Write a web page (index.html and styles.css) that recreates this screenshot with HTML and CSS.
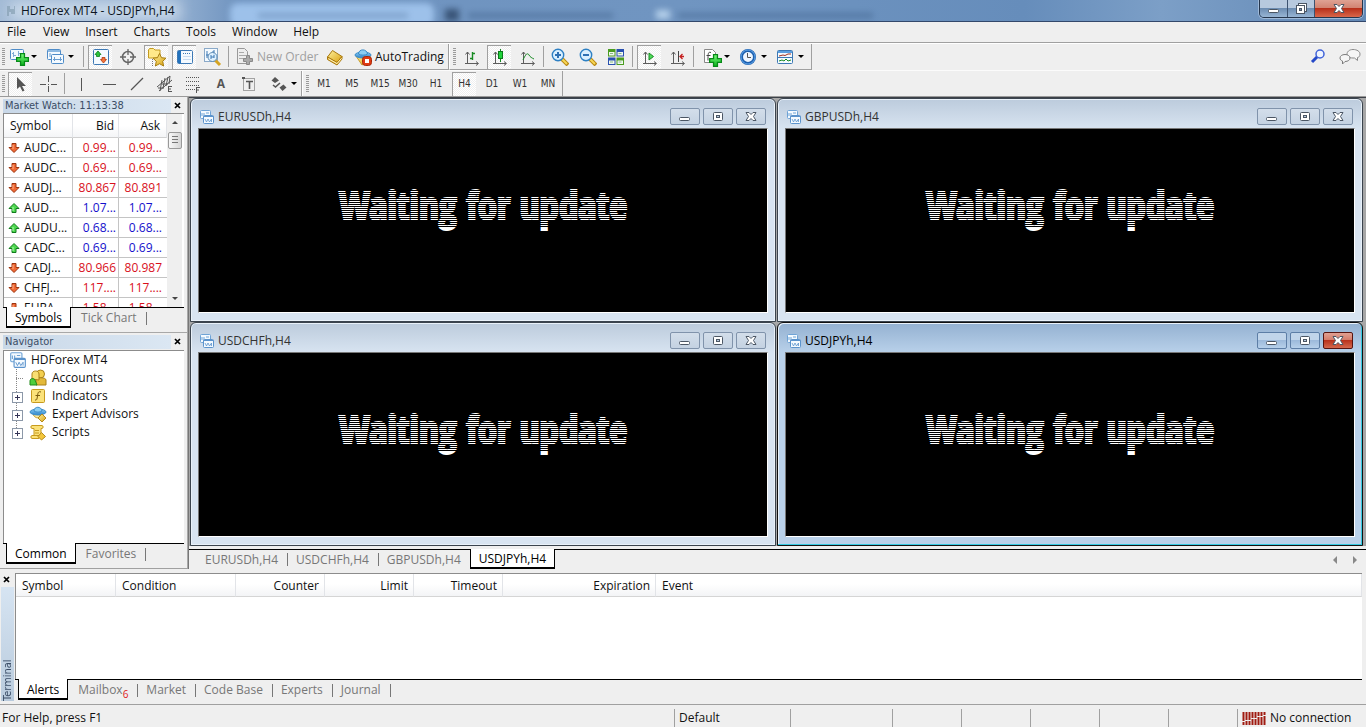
FILE: index.html
```html
<!DOCTYPE html>
<html lang="en">
<head>
<meta charset="utf-8">
<title>HDForex MT4 - USDJPYh,H4</title>
<link rel="stylesheet" href="styles.css">
</head>
<body>
<svg class="defs" aria-hidden="true">
  <defs>
    <linearGradient id="g-green" x1="0" y1="0" x2="0" y2="1"><stop offset="0" stop-color="#7dff7d"/><stop offset="1" stop-color="#0ab01c"/></linearGradient>
    <linearGradient id="g-gold" x1="0" y1="0" x2="1" y2="1"><stop offset="0" stop-color="#fff3a0"/><stop offset="1" stop-color="#d9a010"/></linearGradient>
    <linearGradient id="g-blue" x1="0" y1="0" x2="0" y2="1"><stop offset="0" stop-color="#8fd0f8"/><stop offset="1" stop-color="#2b82c9"/></linearGradient>
    <symbol id="i-chart" viewBox="0 0 16 16"><rect x="1.500" y="1.500" width="10" height="8" rx="1" fill="#f4faff" stroke="#6ea3d6"/><path d="M3 7V4M5 7V4M7 4h3" stroke="#6ea3d6" fill="none"/><rect x="4.500" y="6.500" width="10" height="8" rx="1" fill="#f4faff" stroke="#5b93cc"/><path d="M4.500 7.500h10" stroke="#5b93cc"/><path d="M6 10l1.500 3 1.500-3 1.500 3 2-3v3" stroke="#5b93cc" stroke-width=".8" fill="none"/></symbol>
    <symbol id="i-down" viewBox="0 0 12 12"><path d="M4 1.500h4v4h3L6 10.500 1 5.500h3z" fill="#f26a35" stroke="#9c3510"/><path d="M5 3v4" stroke="#ffb08a"/></symbol>
    <symbol id="i-up" viewBox="0 0 12 12"><path d="M4 10.500h4v-4h3L6 1.500 1 6.500h3z" fill="#4fd94f" stroke="#127a1e"/><path d="M5 9V5" stroke="#b4ffb4"/></symbol>
    <symbol id="i-plus" viewBox="0 0 10 10"><path d="M3.500.5h3v3h3v3h-3v3h-3v-3h-3v-3h3z" fill="url(#g-green)" stroke="#078a18"/></symbol>
    <symbol id="i-min" viewBox="0 0 16 12"><rect x="2.500" y="6.500" width="10" height="3" rx="1" fill="#fff" stroke="#4b5664"/></symbol>
    <symbol id="i-max" viewBox="0 0 16 12"><rect x="3.500" y="1.500" width="9" height="8" rx="1" fill="#fff" stroke="#4b5664"/><rect x="6.500" y="4.500" width="3" height="2" fill="#b9cbe0" stroke="#4b5664"/></symbol>
    <symbol id="i-x" viewBox="0 0 16 12"><path d="M3 1.500h3l2 2 2-2h3L10.500 5.500l2.500 4h-3l-2-2-2 2H3l2.500-4z" fill="#fff" stroke="#4b5664"/></symbol>
    <symbol id="i-axes" viewBox="0 0 16 16"><path d="M4.500 2v12M2 13.500h13M2.500 4.500l2-2.500 2 2.500M13 11.500l2.500 2-2.500 2" fill="none" stroke="#5d5d5d"/></symbol>
    <symbol id="i-cap" viewBox="0 0 18 18"><path d="M2 8l6 9 8-5V8z" fill="url(#g-gold)" stroke="#c79a2a"/><ellipse cx="9" cy="7" rx="8" ry="3" fill="url(#g-blue)" stroke="#3b8cc8"/><path d="M4.500 6c0-5.500 8.500-5.500 9 0-2 1.500-7 1.500-9 0z" fill="#8bcdf2" stroke="#3b8cc8"/></symbol>
    <symbol id="i-expert" viewBox="0 0 18 18"><path d="M4 9c1 3 4 5 7 3V8z" fill="#fbe9a0" stroke="#c79a2a"/><ellipse cx="9" cy="7" rx="8" ry="3" fill="url(#g-blue)" stroke="#3b8cc8"/><path d="M5 6c0-5 7.500-5 8 0-2 1.500-6 1.500-8 0z" fill="#8bcdf2" stroke="#3b8cc8"/><path d="M13 9l4 4-4 4-4-4z" fill="url(#g-gold)" stroke="#b58a1c"/></symbol>
  </defs>
</svg>

<header class="titlebar">
  <div class="glass" aria-hidden="true"><i class="glow"></i><i class="pane"></i><i class="smear one"></i><i class="dot"></i><i class="smear two"></i><i class="light"></i><i class="smear three"></i></div>
  <svg class="app-icon" width="12" height="14" viewBox="0 0 12 14"><path d="M2 2h3v3h4V2h1v8H6V8H4v4H2z" fill="#7f9aac" opacity=".6"/></svg>
  <h1>HDForex MT4 - USDJPYh,H4</h1>
  <div class="caption">
    <button class="cap-min" aria-label="Minimize"><svg width="16" height="12"><use href="#i-min"/></svg></button>
    <button class="cap-res" aria-label="Restore"><svg width="16" height="14" viewBox="0 0 16 14"><rect x="5.500" y="1.500" width="8" height="8" fill="#fff" stroke="#4b5664"/><rect x="3.500" y="3.500" width="8" height="8" fill="#fff" stroke="#4b5664"/><rect x="6.500" y="6.500" width="2" height="2" fill="#7b91ad" stroke="#4b5664"/></svg></button>
    <button class="cap-close" aria-label="Close"><svg width="16" height="12"><use href="#i-x"/></svg></button>
  </div>
</header>

<nav class="menubar">
  <button>File</button><button>View</button><button>Insert</button><button>Charts</button><button>Tools</button><button>Window</button><button>Help</button>
</nav>

<div class="toolrow">
  <div class="toolbar">
    <span class="grip"></span>
    <div class="splits">
      <button class="split" aria-label="New chart"><svg width="20" height="20" viewBox="0 0 20 20"><rect x="1.500" y="2.500" width="13" height="10" rx="1" fill="#f4faff" stroke="#4f8cc8"/><path d="M4.500 5v5M3 6.500h1M5 8.500h2M9.500 4v5M10 6.500h2" stroke="#7fabd6"/><use href="#i-plus" x="7" y="6" width="13" height="13"/></svg><span class="arrow"></span></button>
      <button class="split" aria-label="Profiles"><svg width="20" height="20" viewBox="0 0 20 20"><rect x="1.500" y="2.500" width="13" height="10" rx="1" fill="#f4faff" stroke="#4f8cc8"/><path d="M2 4h12" stroke="#8db9e2" stroke-width="2"/><rect x="5.500" y="7.500" width="12" height="9" rx="1" fill="#f4faff" stroke="#4f8cc8"/><path d="M8.500 10v4M14.500 10v4M7 12.500h9M4 6v4" stroke="#6a9dd0"/></svg><span class="arrow"></span></button>
    </div>
    <span class="sep"></span>
    <div class="group">
      <button class="tool pressed" aria-label="Market Watch"><svg width="18" height="18" viewBox="0 0 18 18"><rect x="1.500" y="1.500" width="15" height="15" rx="1" fill="#f4faff" stroke="#3c78b4"/><path d="M6 3l3 3.500H7.500v2h-3v-2H3z" fill="#2cc43c" stroke="#0b7f1b" stroke-width=".8"/><path d="M11.500 15l3-3.500H13v-2h-3v2H8.500z" fill="#f2743d" stroke="#b1380d" stroke-width=".8"/></svg></button>
      <button class="tool" aria-label="Data Window"><svg width="18" height="18" viewBox="0 0 18 18"><circle cx="9" cy="9" r="5.500" fill="none" stroke="#666" stroke-width="1.500"/><path d="M9 1v6M9 11v6M1 9h6M11 9h6" stroke="#666" stroke-width="1.300"/></svg></button>
      <button class="tool pressed" aria-label="Favorites"><svg width="20" height="20" viewBox="0 0 20 20"><path d="M1.500 11V3l1-1.500h4L8 3h5v8z" fill="#ffe98a" stroke="#c39a20"/><path d="M5.500 12v7" stroke="#777" stroke-dasharray="1 1"/><path d="M12.500 6.500l2 4.200 4.500.5-3.300 3.100.9 4.700-4.100-2.300-4.100 2.300.9-4.700L6 11.200l4.500-.5z" fill="url(#g-gold)" stroke="#a87d0c"/></svg></button>
      <button class="tool pressed" aria-label="Navigator"><svg width="18" height="18" viewBox="0 0 18 18"><rect x="1.500" y="2.500" width="15" height="13" rx="1" fill="#f4faff" stroke="#3c78b4"/><path d="M3.500 3v12" stroke="#2272bd" stroke-width="3"/><path d="M7 5.500h8" stroke="#3c78b4" stroke-dasharray="1 1"/><path d="M7 8.500h8M7 11.500h8" stroke="#c8dcf0"/></svg></button>
      <button class="tool" aria-label="Strategy Tester"><svg width="20" height="20" viewBox="0 0 20 20"><rect x="2.500" y="1.500" width="13" height="13" fill="#f4faff" stroke="#8aa9c8"/><path d="M5 4v7M4 8h3M12 3v6M10 5h2" stroke="#3c78b4"/><path d="M13 13l5 5" stroke="#d5a422" stroke-width="3"/><circle cx="10.500" cy="10" r="4.500" fill="#d9efff" fill-opacity=".8" stroke="#5d8bb5"/><path d="M9 8v4M9 10h3M12 8v3" stroke="#3c78b4"/></svg></button>
    </div>
    <span class="sep"></span>
    <div class="group">
      <button class="labelled new-order" disabled><svg width="20" height="20" viewBox="0 0 20 20"><path d="M2.500 1.500h7l3 3v12h-10z" fill="#eee" stroke="#999"/><path d="M4 5.500h5M4 8.500h7M4 11.500h5" stroke="#aaa"/><path d="M11.500 8.500h3v3h3v3h-3v3h-3v-3h-3v-3h3z" fill="#aaa" stroke="#8a8a8a"/></svg>New Order</button>
      <button class="tool" aria-label="MetaEditor"><svg width="18" height="18" viewBox="0 0 18 18"><path d="M1.500 9l5-6.500 9.500 6-5 6z" fill="url(#g-gold)" stroke="#a9780d"/><path d="M1.500 9v2.500L11 17l5-6V8.500l-5 6z" fill="#e9b93a" stroke="#a9780d"/><path d="M2.500 10.700L11 15.600l4.500-5.300" fill="none" stroke="#fff3c0"/></svg></button>
      <button class="labelled"><svg width="20" height="20" viewBox="0 0 20 20"><use href="#i-cap" x="1" y="1" width="18" height="18"/><rect x="9.500" y="9.500" width="9" height="9" rx="3" fill="#e03a12" stroke="#a92808"/><rect x="12" y="12" width="4" height="4" fill="#fff"/></svg>AutoTrading</button>
    </div>
  </div>
  <div class="toolbar">
    <span class="grip"></span>
    <div class="group lead">
      <button class="tool" aria-label="Bar chart"><svg width="18" height="18" viewBox="0 0 18 18"><use href="#i-axes" x="1" y="2" width="16" height="16"/><path d="M10.500 4v8M8 10.500h2.500M10.500 5.500H13" stroke="#178a22" stroke-width="1.400"/></svg></button>
      <button class="tool pressed" aria-label="Candlesticks"><svg width="18" height="18" viewBox="0 0 18 18"><use href="#i-axes" x="1" y="2" width="16" height="16"/><path d="M10.500 1v13" stroke="#178a22"/><rect x="8.500" y="3.500" width="4" height="7" fill="#1fd43a" stroke="#0c7a1b"/></svg></button>
      <button class="tool" aria-label="Line chart"><svg width="18" height="18" viewBox="0 0 18 18"><use href="#i-axes" x="1" y="2" width="16" height="16"/><path d="M5 12c3-7 5-7 6-5s3 3 5 4" fill="none" stroke="#178a22"/></svg></button>
    </div>
    <span class="sep"></span>
    <div class="group">
      <button class="tool" aria-label="Zoom in"><svg width="18" height="18" viewBox="0 0 18 18"><path d="M11 11l6 6" stroke="#b98812" stroke-width="4"/><path d="M11 11l5 5" stroke="#f7d656" stroke-width="2"/><circle cx="7" cy="7" r="5.700" fill="#d8efff" stroke="#2d80c4" stroke-width="1.400"/><path d="M4 7h6M7 4v6" stroke="#2d70b4" stroke-width="2"/></svg></button>
      <button class="tool" aria-label="Zoom out"><svg width="18" height="18" viewBox="0 0 18 18"><path d="M11 11l6 6" stroke="#b98812" stroke-width="4"/><path d="M11 11l5 5" stroke="#f7d656" stroke-width="2"/><circle cx="7" cy="7" r="5.700" fill="#d8efff" stroke="#2d80c4" stroke-width="1.400"/><path d="M4 7h6" stroke="#2d70b4" stroke-width="2"/></svg></button>
      <button class="tool" aria-label="Tile windows"><svg width="18" height="18" viewBox="0 0 18 18"><path d="M1 1h7.500v7.500H1zM9.500 9.500H17V17H9.500z" fill="#4a9c20"/><path d="M9.500 1H17v7.500H9.500zM1 9.500h7.500V17H1z" fill="#2850b0"/><path d="M2 4h5.500v3.500H2zM10.500 4H16v3.500h-5.500zM2 12.500h5.500V16H2zM10.500 12.500H16V16h-5.500z" fill="#f0f8f0"/><path d="M3 5.500h3M11.500 5.500h3M3 14h3M11.500 14h3" stroke="#8ab88a"/></svg></button>
    </div>
    <span class="sep"></span>
    <div class="group">
      <button class="tool pressed" aria-label="Auto scroll"><svg width="18" height="18" viewBox="0 0 18 18"><use href="#i-axes" x="1" y="2" width="16" height="16"/><path d="M9 5l4.500 3.500L9 12z" fill="#4fdc5a" stroke="#178a22"/></svg></button>
      <button class="tool" aria-label="Chart shift"><svg width="18" height="18" viewBox="0 0 18 18"><use href="#i-axes" x="1" y="2" width="16" height="16"/><path d="M10.500 3v11" stroke="#444"/><path d="M12 8.500h4M14.500 6L12 8.500l2.500 2.500" fill="none" stroke="#c52020" stroke-width="1.300"/></svg></button>
    </div>
    <span class="sep"></span>
    <div class="splits">
      <button class="split" aria-label="Indicators"><svg width="20" height="20" viewBox="0 0 20 20"><path d="M2.500 2.500h8l3 3v10h-11z" fill="#fff" stroke="#888"/><path d="M9 5.500c-3-1-3 1-3 8M4.500 8.500h4" fill="none" stroke="#444"/><use href="#i-plus" x="7" y="7" width="13" height="13"/></svg><span class="arrow"></span></button>
      <button class="split" aria-label="Periods"><svg width="20" height="20" viewBox="0 0 20 20"><circle cx="9" cy="10" r="6.500" fill="#eef6ff" stroke="#1c5fae" stroke-width="3"/><circle cx="9" cy="10" r="7" fill="none" stroke="#5fa5ea"/><path d="M8.500 6v4.500H12" fill="none" stroke="#555"/></svg><span class="arrow"></span></button>
      <button class="split" aria-label="Templates"><svg width="20" height="20" viewBox="0 0 20 20"><rect x="1.500" y="3.500" width="15" height="13" rx="1" fill="#f4faff" stroke="#3c78b4"/><path d="M2 5h14" stroke="#5a9fe0" stroke-width="2"/><path d="M2 10.500h14" stroke="#3c78b4"/><path d="M3 9l4-1 2 .5 3-1.500h3" fill="none" stroke="#a03020"/><path d="M3 14l3-1 2 1 2-2 2 2 3-1" fill="none" stroke="#178a22"/></svg><span class="arrow"></span></button>
    </div>
  </div>
  <div class="right-tools">
    <button class="tool" aria-label="Search"><svg width="18" height="18" viewBox="0 0 18 18"><circle cx="11" cy="6" r="4" fill="#eef4ff" stroke="#3f62d8" stroke-width="1.500"/><path d="M8 9l-5 5" stroke="#2448c8" stroke-width="3"/></svg></button>
    <button class="tool" aria-label="Chat"><svg width="22" height="18" viewBox="0 0 22 18"><path d="M14 1.500c4 0 7 2 7 4.500s-1 3-2.500 3.500v3L15.500 10H14c-4 0-6-2-6-4s2-4.500 6-4.500z" fill="#f6f6f6" stroke="#8b8b8b"/><path d="M6 6.500c3 0 5 1.500 5 3.500s-2 3.500-5 3.500l-2.500 2.500v-3C2 12.500 1 11.500 1 10c0-2 2-3.500 5-3.500z" fill="#f6f6f6" stroke="#7b7b7b"/></svg></button>
  </div>
</div>

<div class="toolrow second">
  <div class="toolbar">
    <span class="grip"></span>
    <div class="group cursors">
      <button class="tool pressed" aria-label="Cursor"><svg width="18" height="18" viewBox="0 0 18 18"><path d="M5 2v12l3-2.500 2.500 5 2-1-2.500-4.500h4z" fill="#555"/></svg></button>
      <button class="tool" aria-label="Crosshair"><svg width="18" height="18" viewBox="0 0 18 18"><path d="M9.500 1v6M9.500 11v6M1 9.500h6M12 9.500h6M9 9.500h1" stroke="#555"/></svg></button>
    </div>
    <span class="sep"></span>
    <div class="group">
      <button class="tool" aria-label="Vertical line"><svg width="18" height="18" viewBox="0 0 18 18"><path d="M9.500 3v13" stroke="#555"/></svg></button>
      <button class="tool" aria-label="Horizontal line"><svg width="18" height="18" viewBox="0 0 18 18"><path d="M3 9.500h13" stroke="#555"/></svg></button>
      <button class="tool" aria-label="Trendline"><svg width="18" height="18" viewBox="0 0 18 18"><path d="M3 15L15 3" stroke="#555" stroke-width="1.200"/></svg></button>
      <button class="tool" aria-label="Equidistant channel"><svg width="18" height="18" viewBox="0 0 18 18"><path d="M1 12L14 1M3 16L16 5M4 16L6 5M7 13L9 3M10 11l2-9M13 9l1-8M2 13h6M6 9h6" stroke="#555" fill="none"/><path d="M12.500 11v6M12 11.500h4M12 14h3M12 16.500h4" stroke="#555"/></svg></button>
      <button class="tool" aria-label="Fibonacci retracement"><svg width="18" height="18" viewBox="0 0 18 18"><path d="M2 2.500h14M2 6.500h14M2 10.500h14M2 14.500h9" stroke="#555" stroke-dasharray="1 1"/><path d="M12.500 12v6M12 12.500h4M12 15h3" stroke="#555"/></svg></button>
      <button class="tool glyph" aria-label="Text">A</button>
      <button class="tool" aria-label="Text label"><svg width="18" height="18" viewBox="0 0 18 18"><rect x="3.500" y="3.500" width="11" height="12" fill="none" stroke="#555" stroke-dasharray="1 1"/><path d="M2 2h3v2H2z" fill="#555"/><path d="M6 6.500h7M9.500 6v8" stroke="#555" stroke-width="1.600"/></svg></button>
    </div>
    <div class="splits shapes">
      <button class="split" aria-label="Arrows"><svg width="20" height="20" viewBox="0 0 20 20"><path d="M6 3l4 3.500L6 9 2.500 6.500z M14.500 10.500l3 3-4 3.500-3-3.500z" fill="#555"/><path d="M4 11l2.500 2 4.500-4" fill="none" stroke="#555" stroke-width="1.600"/></svg><span class="arrow"></span></button>
    </div>
  </div>
  <div class="toolbar">
    <span class="grip"></span>
    <div class="group frames">
      <button class="tool">M1</button><button class="tool">M5</button><button class="tool">M15</button><button class="tool">M30</button><button class="tool">H1</button><button class="tool pressed">H4</button><button class="tool">D1</button><button class="tool">W1</button><button class="tool">MN</button>
    </div>
  </div>
</div>

<main class="workspace">
  <aside class="side">
    <section class="panel watch">
      <header class="panel-head"><h2>Market Watch: 11:13:38</h2><button class="x" aria-label="Close Market Watch"><svg width="7" height="7" viewBox="0 0 7 7"><path d="M1 1l5 5M6 1L1 6" stroke="#000" stroke-width="1.700"/></svg></button></header>
      <div class="quotes">
        <table>
          <thead><tr><th>Symbol</th><th>Bid</th><th>Ask</th></tr></thead>
          <tbody>
            <tr class="down"><td><svg width="12" height="12"><use href="#i-down"/></svg>AUDC...</td><td>0.99...</td><td>0.99...</td></tr>
            <tr class="down"><td><svg width="12" height="12"><use href="#i-down"/></svg>AUDC...</td><td>0.69...</td><td>0.69...</td></tr>
            <tr class="down"><td><svg width="12" height="12"><use href="#i-down"/></svg>AUDJ...</td><td>80.867</td><td>80.891</td></tr>
            <tr class="up"><td><svg width="12" height="12"><use href="#i-up"/></svg>AUD...</td><td>1.07...</td><td>1.07...</td></tr>
            <tr class="up"><td><svg width="12" height="12"><use href="#i-up"/></svg>AUDU...</td><td>0.68...</td><td>0.68...</td></tr>
            <tr class="up"><td><svg width="12" height="12"><use href="#i-up"/></svg>CADC...</td><td>0.69...</td><td>0.69...</td></tr>
            <tr class="down"><td><svg width="12" height="12"><use href="#i-down"/></svg>CADJ...</td><td>80.966</td><td>80.987</td></tr>
            <tr class="down"><td><svg width="12" height="12"><use href="#i-down"/></svg>CHFJ...</td><td>117....</td><td>117....</td></tr>
            <tr class="down"><td><svg width="12" height="12"><use href="#i-down"/></svg>EURA...</td><td>1.58...</td><td>1.58...</td></tr>
          </tbody>
        </table>
        <div class="scrollbar"><button class="sb-up" aria-label="Scroll up"></button><span class="thumb"></span><button class="sb-down" aria-label="Scroll down"></button></div>
      </div>
      <div class="tabs"><button class="active">Symbols</button><button>Tick Chart</button></div>
    </section>
    <section class="panel navigator">
      <header class="panel-head"><h2>Navigator</h2><button class="x" aria-label="Close Navigator"><svg width="7" height="7" viewBox="0 0 7 7"><path d="M1 1l5 5M6 1L1 6" stroke="#000" stroke-width="1.700"/></svg></button></header>
      <div class="tree">
        <div class="root"><svg width="18" height="18"><use href="#i-chart"/></svg>HDForex MT4</div>
        <ul>
          <li><span class="branch"></span><svg width="18" height="18" viewBox="0 0 18 18"><circle cx="11.500" cy="5" r="4" fill="#f3cf4f" stroke="#a9811a"/><path d="M7 16v-5c0-3 10-3 10 0v5z" fill="#e3b93a" stroke="#a9811a"/><path d="M3 10V5c0-4 7-4 7 0v6z" fill="#f8de72" stroke="#a9811a"/><path d="M1 16v-4c0-3 4-3 5-1l2 5z" fill="#4fce3e" stroke="#238a1a"/></svg>Accounts</li>
          <li><span class="branch plus"></span><svg width="18" height="18" viewBox="0 0 18 18"><rect x="2.500" y="2.500" width="13" height="13" rx="1" fill="#fbe27a" stroke="#c79a1e"/><path d="M12 5c-3-1-3 1-3.500 4S8 13.500 6 13M6.500 8.500h4.500" fill="none" stroke="#7c5c0c"/></svg>Indicators</li>
          <li><span class="branch plus"></span><svg width="18" height="18"><use href="#i-expert"/></svg>Expert Advisors</li>
          <li><span class="branch plus last"></span><svg width="18" height="18" viewBox="0 0 18 18"><path d="M3 2.500h10c1.500 0 1.500 3 0 3h-1v8H5v-8H3c-1.500 0-1.500-3 0-3z" fill="#fbe27a" stroke="#c79a1e"/><path d="M6 7.500h4M6 10h4" stroke="#c79a1e"/><path d="M3 12.500h7v3H3c-1.500 0-1.500-3 0-3z" fill="#fbe27a" stroke="#c79a1e"/><path d="M12.500 9.500l4 4-4 3.500-3.500-3.500z" fill="#f3c63c" stroke="#b58a1c"/></svg>Scripts</li>
        </ul>
      </div>
      <div class="tabs"><button class="active">Common</button><button>Favorites</button></div>
    </section>
  </aside>

  <section class="mdi">
    <div class="windows">
      <article class="window"><header><svg width="16" height="16"><use href="#i-chart"/></svg><h3>EURUSDh,H4</h3><button aria-label="Minimize"><svg width="16" height="12"><use href="#i-min"/></svg></button><button aria-label="Maximize"><svg width="16" height="12"><use href="#i-max"/></svg></button><button aria-label="Close"><svg width="16" height="12"><use href="#i-x"/></svg></button></header><div class="chart"><p>Waiting for update</p></div></article>
      <article class="window"><header><svg width="16" height="16"><use href="#i-chart"/></svg><h3>GBPUSDh,H4</h3><button aria-label="Minimize"><svg width="16" height="12"><use href="#i-min"/></svg></button><button aria-label="Maximize"><svg width="16" height="12"><use href="#i-max"/></svg></button><button aria-label="Close"><svg width="16" height="12"><use href="#i-x"/></svg></button></header><div class="chart"><p>Waiting for update</p></div></article>
      <article class="window"><header><svg width="16" height="16"><use href="#i-chart"/></svg><h3>USDCHFh,H4</h3><button aria-label="Minimize"><svg width="16" height="12"><use href="#i-min"/></svg></button><button aria-label="Maximize"><svg width="16" height="12"><use href="#i-max"/></svg></button><button aria-label="Close"><svg width="16" height="12"><use href="#i-x"/></svg></button></header><div class="chart"><p>Waiting for update</p></div></article>
      <article class="window focused"><header><svg width="16" height="16"><use href="#i-chart"/></svg><h3>USDJPYh,H4</h3><button aria-label="Minimize"><svg width="16" height="12"><use href="#i-min"/></svg></button><button aria-label="Maximize"><svg width="16" height="12"><use href="#i-max"/></svg></button><button class="close" aria-label="Close"><svg width="16" height="12"><use href="#i-x"/></svg></button></header><div class="chart"><p>Waiting for update</p></div></article>
    </div>
    <div class="tabs chart-tabs"><button>EURUSDh,H4</button><button>USDCHFh,H4</button><button class="before">GBPUSDh,H4</button><button class="active">USDJPYh,H4</button><span class="pager"><button aria-label="Previous"></button><button class="next" aria-label="Next"></button></span></div>
  </section>
</main>

<section class="terminal">
  <div class="rail"><button class="x" aria-label="Close Terminal"><svg width="7" height="7" viewBox="0 0 7 7"><path d="M1 1l5 5M6 1L1 6" stroke="#000" stroke-width="1.700"/></svg></button><h2>Terminal</h2></div>
  <div class="terminal-body">
    <div class="alerts">
      <table>
        <thead><tr><th class="c-symbol">Symbol</th><th class="c-condition">Condition</th><th class="c-num right">Counter</th><th class="c-num right">Limit</th><th class="c-num right">Timeout</th><th class="c-exp right">Expiration</th><th>Event</th></tr></thead>
      </table>
    </div>
    <div class="tabs"><button class="active">Alerts</button><button class="mail">Mailbox<sub>6</sub></button><button>Market</button><button>Code Base</button><button>Experts</button><button>Journal</button></div>
  </div>
</section>

<footer class="status">
  <span class="help">For Help, press F1</span><span class="s-profile">Default</span><span class="s-date"></span><span class="s-cell"></span><span class="s-cell"></span><span class="s-cell"></span><span class="s-cell"></span><span class="s-cell"></span>
  <span class="s-conn"><svg width="24" height="13" viewBox="0 0 24 13"><path d="M1.500 0v9M4.500 0v8M7.500 0v8M10.500 0v6M13.500 0v6M16.500 0v4M19.500 0v4M22.500 0v3M1.500 10v3M4.500 9v4M7.500 9v4M10.500 7v6M13.500 7v6M16.500 5v8M19.500 5v8M22.500 4v9" stroke="#a01c12" stroke-width="2"/></svg>No connection</span>
</footer>
</body>
</html>
```
FILE: styles.css
```css
* { box-sizing: border-box; }
html, body { height: 100%; }
body {
  margin: 0;
  display: flex;
  flex-direction: column;
  background: #efefef;
  color: #111;
  font: 12px/16px "Segoe UI", "Open Sans", "Noto Sans", sans-serif;
  overflow: hidden;
}
button { font: inherit; color: inherit; background: none; border: 0; padding: 0; margin: 0; }
h1, h2, h3, p, ul { margin: 0; padding: 0; font-size: inherit; font-weight: normal; list-style: none; }
svg { display: block; flex: none; }
.defs { position: absolute; width: 0; height: 0; }

/* Title bar */
.titlebar {
  position: relative;
  flex: none;
  display: flex;
  align-items: center;
  height: 22px;
  padding-left: 5px;
  border-bottom: 1px solid #33486b;
  background: linear-gradient(90deg, #a3bbd6 0, #91aed0 180px, #6f93bf 240px, #7095c1 50%, #668dbb 75%, #7c9fc7 85%, #6288b5 100%);
}
.glass { position: absolute; inset: 0; overflow: hidden; }
.glass i { position: absolute; }
.glow { left: 10px; top: 2px; width: 170px; height: 18px; background: #cbdaea; filter: blur(7px); }
.pane { left: 230px; top: 3px; width: 204px; height: 24px; background: #9dc1ea; border-radius: 8px; filter: blur(3px); }
.smear { height: 5px; top: 13px; background: #43658f; filter: blur(3px); opacity: .6; }
.one { left: 258px; width: 150px; opacity: .35; }
.two { left: 468px; width: 145px; }
.three { left: 678px; width: 195px; }
.dot { left: 445px; top: 9px; width: 14px; height: 12px; background: #2c4566; filter: blur(3px); opacity: .8; }
.light { left: 656px; top: 10px; width: 14px; height: 9px; background: #b4cfea; filter: blur(3px); }
.app-icon, .titlebar h1, .caption { position: relative; }
.titlebar h1 { margin-left: 4px; flex: 1; color: #0c1522; }
.caption {
  align-self: flex-start;
  display: flex;
  height: 18px;
  margin-right: 3px;
  border: 1px solid #25364d;
  border-top: 0;
  border-radius: 0 0 5px 5px;
  overflow: hidden;
  box-shadow: 0 0 0 1px #9fb9d8;
}
.caption button { display: flex; align-items: center; justify-content: center; background: linear-gradient(#b7c9de 45%, #6d8db2 50%, #98b5d4); border-right: 1px solid #3c5270; }
.caption .cap-min { width: 28px; }
.caption .cap-res { width: 27px; }
.caption .cap-close { width: 47px; border-right: 0; background: linear-gradient(#dfa293, #d28472 45%, #b8301a 50%, #d9674a); }

/* Menu */
.menubar { flex: none; display: flex; height: 21px; border-bottom: 1px solid #a0a0a0; padding-left: 1px; }
.menubar button { padding: 0 8px; }
.menubar button:first-child { padding: 0 9px 0 6px; }

/* Toolbars */
.toolrow { flex: none; display: flex; height: 27px; border-top: 1px solid #fff; }
.toolbar { display: flex; align-items: center; height: 26px; border-right: 1px solid #a0a0a0; border-bottom: 1px solid #a0a0a0; padding: 0 2px; }
.second { height: 26px; border-top-color: #fbfbfb; }
.second .toolbar { height: 25px; border-bottom: 0; }
.toolbar + .toolbar { padding: 0 2px 0 3px; border-left: 1px solid #fff; }
.grip { width: 3px; height: 18px; background: repeating-linear-gradient(#9a9a9a 0 1px, #efefef 1px 2px); }
.group { display: flex; gap: 4px; }
.splits { display: flex; }
.lead { margin-left: 3px; }
.cursors { margin-left: 3px; }
.frames { margin-left: 3px; font: 10px/14px "DejaVu Sans Condensed", "DejaVu Sans", sans-serif; color: #333; }
.shapes { margin-left: 4px; margin-right: -3px; }
.sep { width: 1px; height: 21px; margin: 0 4px; background: #a0a0a0; }
.tool { display: flex; align-items: center; justify-content: center; width: 24px; height: 24px; white-space: nowrap; }
.pressed { background: repeating-conic-gradient(#fff 0 25%, #efefef 0 50%) 0 0 / 2px 2px; border-top: 1px solid #a0a0a0; border-left: 1px solid #a0a0a0; }
.glyph { font: bold 12px "Open Sans", sans-serif; color: #555; }
.split { display: flex; align-items: center; width: 37px; height: 24px; padding-left: 4px; }
.arrow { border: 3px solid transparent; border-top-color: #000; border-bottom: 0; margin-left: 2px; }
.labelled { display: flex; align-items: center; gap: 2px; padding: 0 2px; height: 24px; white-space: nowrap; }
.new-order { width: 86px; color: #a0a0a0; }
.right-tools { flex: 1; display: flex; justify-content: flex-end; align-items: center; gap: 8px; padding-right: 4px; }

/* Workspace */
.workspace { flex: 1; min-height: 0; display: grid; grid-template-columns: 188px minmax(0, 1fr); border-top: 1px solid #9a9a9a; }
.side { display: flex; flex-direction: column; min-height: 0; border-bottom: 1px solid #a0a0a0; }
.panel { display: flex; flex-direction: column; padding: 1px 3px 4px 3px; border-right: 1px solid #a8a8a8; }
.watch { height: 236px; border-bottom: 1px solid #a8a8a8; }
.navigator { flex: 1; min-height: 0; }
.panel-head { flex: none; display: flex; align-items: center; justify-content: space-between; height: 15px; color: #3b4d66; font: 11px/14px "Tahoma", "DejaVu Sans Condensed", "DejaVu Sans", sans-serif; }
.panel-head h2 { flex: 1; height: 14px; padding-left: 2px; background: linear-gradient(90deg, #c9d8e8, #dbe7f3); }
.x { display: flex; align-items: center; justify-content: center; width: 13px; height: 13px; }
.quotes { flex: 1; min-height: 0; display: flex; overflow: hidden; border-top: 1px solid #8c8c8c; border-left: 1px solid #8c8c8c; background: #fff; }
.quotes table { flex: none; align-self: flex-start; width: 163px; table-layout: fixed; border-collapse: separate; border-spacing: 0; }
.quotes th { height: 24px; padding: 0 6px; font-weight: normal; text-align: right; background: linear-gradient(#fff 50%, #f4f5f7); border-right: 1px solid #e2e4e8; border-bottom: 1px solid #d0d0d0; }
.quotes th:first-child { width: 69px; text-align: left; }
.quotes th:nth-child(2) { width: 46px; padding-right: 4px; }
.quotes td { height: 20px; padding: 0 2px 0 0; text-align: right; border-right: 1px solid #c4c4c4; border-bottom: 1px solid #c4c4c4; }
.quotes td:first-child { display: flex; align-items: center; gap: 4px; padding-left: 4px; color: #111; }
.quotes td:last-child { padding-right: 5px; border-right: 0; }
.down { color: #d8101c; }
.up { color: #1410cc; }
.scrollbar { flex: 1; display: flex; flex-direction: column; align-items: center; background: #efefef; margin-right: 2px; }
.scrollbar button { width: 15px; height: 17px; display: flex; align-items: center; justify-content: center; }
.sb-up::before, .sb-down::before { content: ""; border: 3px solid transparent; border-top: 0; border-bottom-color: #444; }
.sb-down::before { border-top: 3px solid #444; border-bottom: 0; }
.sb-down { margin-top: auto; }
.thumb { width: 14px; height: 17px; margin-top: 1px; border: 1px solid #999; border-radius: 2px; padding: 3px; background: repeating-linear-gradient(#777 0 1px, transparent 1px 3px) content-box, linear-gradient(90deg, #f8f8f8, #d5d5d5); }

/* Tabs */
.tabs { flex: none; display: flex; height: 21px; border-top: 1px solid #000; background: #efefef; color: #777; }
.tabs > button { height: 20px; padding: 0 9px; line-height: 18px; white-space: nowrap; display: flex; align-items: center; }
.tabs > button::after { content: ""; width: 1px; height: 13px; margin-right: -10px; margin-left: 9px; background: #777; }
.tabs > .active { height: 21px; margin-top: -1px; margin-left: 3px; padding: 2px 8px 0; background: #fff; color: #000; border: 1px solid #000; border-top: 0; border-bottom-width: 2px; }
.tabs > .active + button { margin-left: 1px; }
.tabs > .active::after, .tabs > .before::after { display: none; }

/* Navigator tree */
.tree { flex: 1; min-height: 0; margin-top: 1px; padding: 0 5px; background: #fff; border-top: 1px solid #8c8c8c; border-left: 1px solid #8c8c8c; }
.root, .tree li { display: flex; align-items: center; height: 18px; gap: 4px; }
.tree li { padding-left: 2px; gap: 5px; }
.branch { position: relative; flex: none; width: 13px; height: 18px; background: repeating-linear-gradient(#888 0 1px, transparent 1px 2px) 5px 0 / 1px 100% no-repeat, repeating-linear-gradient(90deg, #888 0 1px, transparent 1px 2px) 5px 9px / 10px 1px no-repeat; }
.last { background-size: 1px 10px, 10px 1px; }
.plus::before { content: ""; position: absolute; left: 1px; top: 5px; width: 9px; height: 9px; border: 1px solid #8c98a8; background: linear-gradient(#335, #335) center / 5px 1px no-repeat, linear-gradient(#335, #335) center / 1px 5px no-repeat, #fff; }

/* Chart windows */
.mdi { display: flex; flex-direction: column; min-width: 0; min-height: 0; border-left: 1px solid #777; }
.windows { flex: 1; min-height: 0; display: grid; grid-template: 1fr 1fr / 1fr 1fr; column-gap: 1px; padding: 0 3px 0 1px; background: #a7a7a7; border-top: 1px solid #3c4148; }
.window { display: flex; flex-direction: column; min-width: 0; min-height: 0; padding: 0 7px 8px; border: 1px solid #3b444e; border-radius: 6px 6px 0 0; background: linear-gradient(#bccbdc, #d8e4f1 30px); box-shadow: inset 0 0 0 1px #e9f1f9; }
.window header { flex: none; display: flex; align-items: center; height: 29px; padding: 6px 2px 0 1px; gap: 3px; color: #333; }
.window h3 { flex: 1; }
.window header button { display: flex; align-items: center; justify-content: center; width: 30px; height: 17px; border: 1px solid #8093ab; border-radius: 2px; background: linear-gradient(#d3deea, #c4d2e2); }
.chart { flex: 1; min-height: 0; background: #000; border: 1px solid; border-color: #777 #fff #fff #777; text-align: center; padding-top: 54px; overflow: hidden; }
.chart p { position: relative; display: inline-block; font: bold 39px/44px "Impact", "Liberation Sans Narrow", "Open Sans Condensed", "Roboto Condensed", "DejaVu Sans Condensed", sans-serif; white-space: nowrap; color: #fff; -webkit-text-stroke: 2px #fff; }
.chart p::after { content: ""; position: absolute; inset: 0 -4px; background: repeating-linear-gradient(transparent 0 1px, #000 1px 2px); }
.focused { background: linear-gradient(#94b1d1, #b9d1ea 30px); box-shadow: inset -1px -1px 0 #35c9e0, inset 1px 1px 0 #e9f1f9; border-color: #111; }
.focused header { color: #000; }
.focused header button { border-color: #5d7ea6; background: linear-gradient(#c1d5ea 50%, #9dbadb 50%, #b6d0ea); }
.focused header .close { border-color: #571410; background: linear-gradient(#e0a193, #d47a68 48%, #b9331d 50%, #d4684d); }
.chart-tabs { margin-top: 3px; height: 20px; padding-left: 7px; box-shadow: 0 -3px #efefef; }
.chart-tabs > button { height: 19px; }
.chart-tabs > .active { height: 20px; margin-left: 0; }
.pager { margin-left: auto; display: flex; align-items: center; gap: 16px; padding-right: 9px; }
.pager button { border: 4px solid transparent; border-left: 0; border-right: 4px solid #888; }
.pager .next { border-right: 0; border-left: 4px solid #888; }

/* Terminal */
.terminal { flex: none; display: flex; height: 136px; padding-top: 4px; border-bottom: 1px solid #a0a0a0; }
.rail { flex: none; display: flex; flex-direction: column; width: 15px; padding: 0 1px 3px 0; }
.rail h2 { flex: 1; margin-top: 1px; margin-left: 1px; writing-mode: vertical-rl; transform: rotate(180deg); text-align: left; background: linear-gradient(#b9cbdd, #d6e4f2); color: #3b4d66; font: 11px/13px "Tahoma", "DejaVu Sans Condensed", "DejaVu Sans", sans-serif; }
.terminal-body { flex: 1; min-width: 0; display: flex; flex-direction: column; margin: 0 4px 4px 0; }
.alerts { flex: 1; background: #fff; border: 1px solid #8c8c8c; border-width: 1px 0 0 1px; }
.alerts table { width: 100%; table-layout: fixed; border-spacing: 0; }
.alerts th { height: 23px; padding: 2px 5px 0 6px; font-weight: normal; text-align: left; background: linear-gradient(#fff 45%, #f3f4f6); border-right: 1px solid #e2e4e8; border-bottom: 1px solid #d5d5d5; }
.alerts .right { text-align: right; }
.c-symbol { width: 100px; }
.c-condition { width: 120px; }
.c-num { width: 89px; }
.c-exp { width: 153px; }
.mail sub { align-self: flex-end; color: #e01818; font-size: 10px; line-height: 11px; vertical-align: baseline; }

/* Status bar */
.status { flex: none; display: flex; height: 22px; padding-top: 4px; }
.status span { flex: none; padding-left: 4px; border-left: 1px solid #a0a0a0; line-height: 18px; white-space: nowrap; }
.status .help { flex: 1; border-left: 0; padding-left: 2px; }
.status .s-profile { width: 116px; }
.status .s-date { width: 102px; }
.status .s-cell { width: 69px; }
.status .s-conn { display: flex; align-items: center; gap: 4px; width: 129px; }
```
